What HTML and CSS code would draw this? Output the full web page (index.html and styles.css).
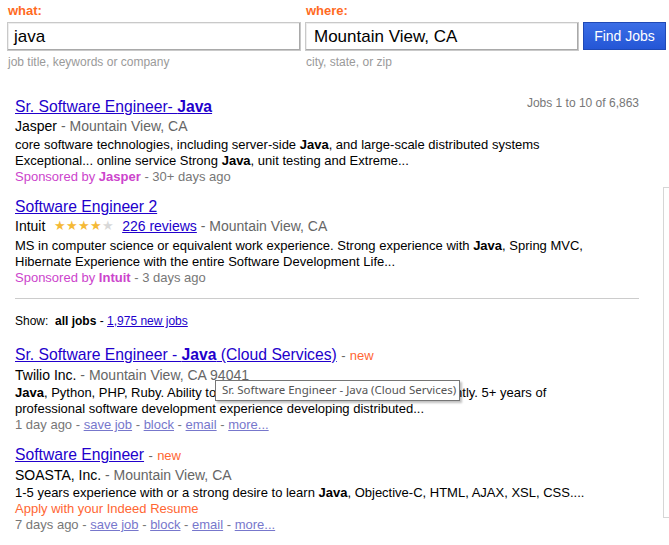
FILE: index.html
```html
<!DOCTYPE html>
<html>
<head>
<meta charset="utf-8">
<link rel="stylesheet" href="styles.css">
</head>
<body>
<form class="search">
  <div class="field what">
    <div class="label">what:</div>
    <div class="input">java</div>
    <div class="hint">job title, keywords or company</div>
  </div>
  <div class="field where">
    <div class="label">where:</div>
    <div class="input">Mountain View, CA</div>
    <div class="hint">city, state, or zip</div>
  </div>
  <div class="btnwrap"><div class="btn">Find Jobs</div></div>
</form>

<div class="main">
  <div class="results">
    <div class="count">Jobs 1 to 10 of 6,863</div>

    <div class="job">
      <div class="title"><a href="#">Sr. Software Engineer- <b>Java</b></a></div>
      <div class="company">Jasper <span class="loc">- Mountain View, CA</span></div>
      <div class="snippet">core software technologies, including server-side <b>Java</b>, and large-scale distributed systems<br>Exceptional... online service Strong <b>Java</b>, unit testing and Extreme...</div>
      <div class="meta"><span class="spon">Sponsored by <b>Jasper</b></span> - 30+ days ago</div>
    </div>

    <div class="job">
      <div class="title"><a href="#">Software Engineer 2</a></div>
      <div class="company">Intuit <span class="stars"><span class="on">★★★★</span><span class="off">★</span></span> <a class="rev" href="#">226 reviews</a> <span class="loc">- Mountain View, CA</span></div>
      <div class="snippet">MS in computer science or equivalent work experience. Strong experience with <b>Java</b>, Spring MVC,<br>Hibernate Experience with the entire Software Development Life...</div>
      <div class="meta"><span class="spon">Sponsored by <b>Intuit</b></span> - 3 days ago</div>
    </div>

    <hr class="sep">

    <div class="show">Show: &nbsp;<b>all jobs</b> - <a href="#">1,975 new jobs</a></div>

    <div class="job organic tip-host">
      <div class="title"><a href="#">Sr. Software Engineer - <b>Java</b> (Cloud Services)</a> <span class="dash">-</span> <span class="new">new</span></div>
      <div class="company">Twilio Inc. <span class="loc">- Mountain View, CA 94041</span></div>
      <div class="snippet"><b>Java</b>, Python, PHP, Ruby. Ability to work effectively in a team and independently. 5+ years of<br>professional software development experience developing distributed...</div>
      <div class="meta">1 day ago - <a href="#">save job</a> - <a href="#">block</a> - <a href="#">email</a> - <a href="#">more...</a></div>
      <div class="tooltip">Sr. Software Engineer - Java (Cloud Services)</div>
    </div>

    <div class="job organic">
      <div class="title"><a href="#">Software Engineer</a> <span class="dash">-</span> <span class="new">new</span></div>
      <div class="company">SOASTA, Inc. <span class="loc">- Mountain View, CA</span></div>
      <div class="snippet">1-5 years experience with or a strong desire to learn <b>Java</b>, Objective-C, HTML, AJAX, XSL, CSS....</div>
      <div class="apply">Apply with your Indeed Resume</div>
      <div class="meta">7 days ago - <a href="#">save job</a> - <a href="#">block</a> - <a href="#">email</a> - <a href="#">more...</a></div>
    </div>
  </div>
  <div class="side"></div>
</div>
</body>
</html>
```

FILE: styles.css
```css
html, body {
  margin: 0;
  padding: 0;
  background: #fff;
}
body {
  font-family: "Liberation Sans", Arial, sans-serif;
  color: #000;
  overflow: hidden;
  width: 669px;
  height: 545px;
}
.search {
  display: flex;
  padding: 3px 0 0 7px;
  margin: 0;
}
.field .label {
  color: #ff6a1f;
  font-weight: bold;
  font-size: 13px;
  line-height: 16px;
  height: 19px;
  padding-left: 1px;
}
.field .input {
  box-sizing: border-box;
  height: 29px;
  border: 1px solid #c9c9c9;
  box-shadow: inset -1px -1px 0 #a9a9a9, inset 1px 1px 0 #eee;
  font-size: 17px;
  line-height: 27px;
  padding-left: 6px;
  color: #000;
}
.what .input { width: 294px; }
.where { margin-left: 4px; }
.where .input { width: 274px; padding-left: 8px; }
.field .hint {
  color: #9a9a9a;
  font-size: 12px;
  line-height: 14px;
  margin-top: 4px;
  padding-left: 1px;
}
.btnwrap {
  padding-top: 19px;
  margin-left: 4px;
}
.btn {
  box-sizing: border-box;
  width: 83px;
  height: 28px;
  background: linear-gradient(#3b6ee6, #2456d6);
  border: 1px solid #1f49b5;
  color: #fff;
  font-size: 14px;
  line-height: 26px;
  text-align: center;
}

.main {
  display: flex;
  margin-top: 28px;
}
.results {
  flex: 0 0 624px;
  width: 624px;
  margin-left: 15px;
  position: relative;
}
.side {
  flex: 0 0 20px;
  margin-left: 24px;
  margin-top: 90px;
  height: 329px;
  border: 1px solid #d6d6d6;
  border-right: 0;
}
.count {
  position: absolute;
  right: 0;
  top: -1px;
  font-size: 12px;
  line-height: 14px;
  color: #777;
}
a {
  color: #2200cc;
}
.job .title {
  font-size: 15.7px;
  line-height: 20px;
}
.job .title a { color: #2200cc; }
.job .company {
  font-size: 14px;
  line-height: 19px;
  color: #000;
}
.loc { color: #666; }
.snippet {
  font-size: 13px;
  line-height: 16px;
  padding-top: 1px;
}
.meta {
  font-size: 13px;
  line-height: 16px;
  color: #777;
}
.spon { color: #cc44cc; }
.job { margin-bottom: 12px; }
.job.organic .company { line-height: 18px; }
.stars {
  font-size: 12.5px;
  margin: 0 4px 0 5px;
  position: relative;
  top: -1px;
}
.stars .on { color: #f5b935; }
.stars .off { color: #d8d8d8; }
.rev { font-size: 14px; color: #2200cc; }
.sep {
  border: 0;
  border-top: 1px solid #ccc;
  margin: 3px 0 0 0;
  height: 0;
}
.show {
  font-size: 12px;
  line-height: 14px;
  margin: 15px 0 17px 0;
}
.show a { color: #2200cc; }
.dash { font-size: 13px; color: #666; }
.new { font-size: 13px; color: #ff6633; }
.apply { font-size: 13px; line-height: 16px; color: #ff6633; }
.meta a { color: #7777cc; }
.tip-host { position: relative; }
.tooltip {
  position: absolute;
  left: 200px;
  top: 35px;
  box-sizing: border-box;
  width: 245px;
  height: 21px;
  border: 1px solid #767676;
  background: #fff;
  box-shadow: 2px 2px 2px rgba(0,0,0,0.25);
  font-family: "Noto Sans", "Open Sans", sans-serif;
  font-size: 11.5px;
  line-height: 18px;
  color: #555;
  padding-left: 6px;
  white-space: nowrap;
}
```
